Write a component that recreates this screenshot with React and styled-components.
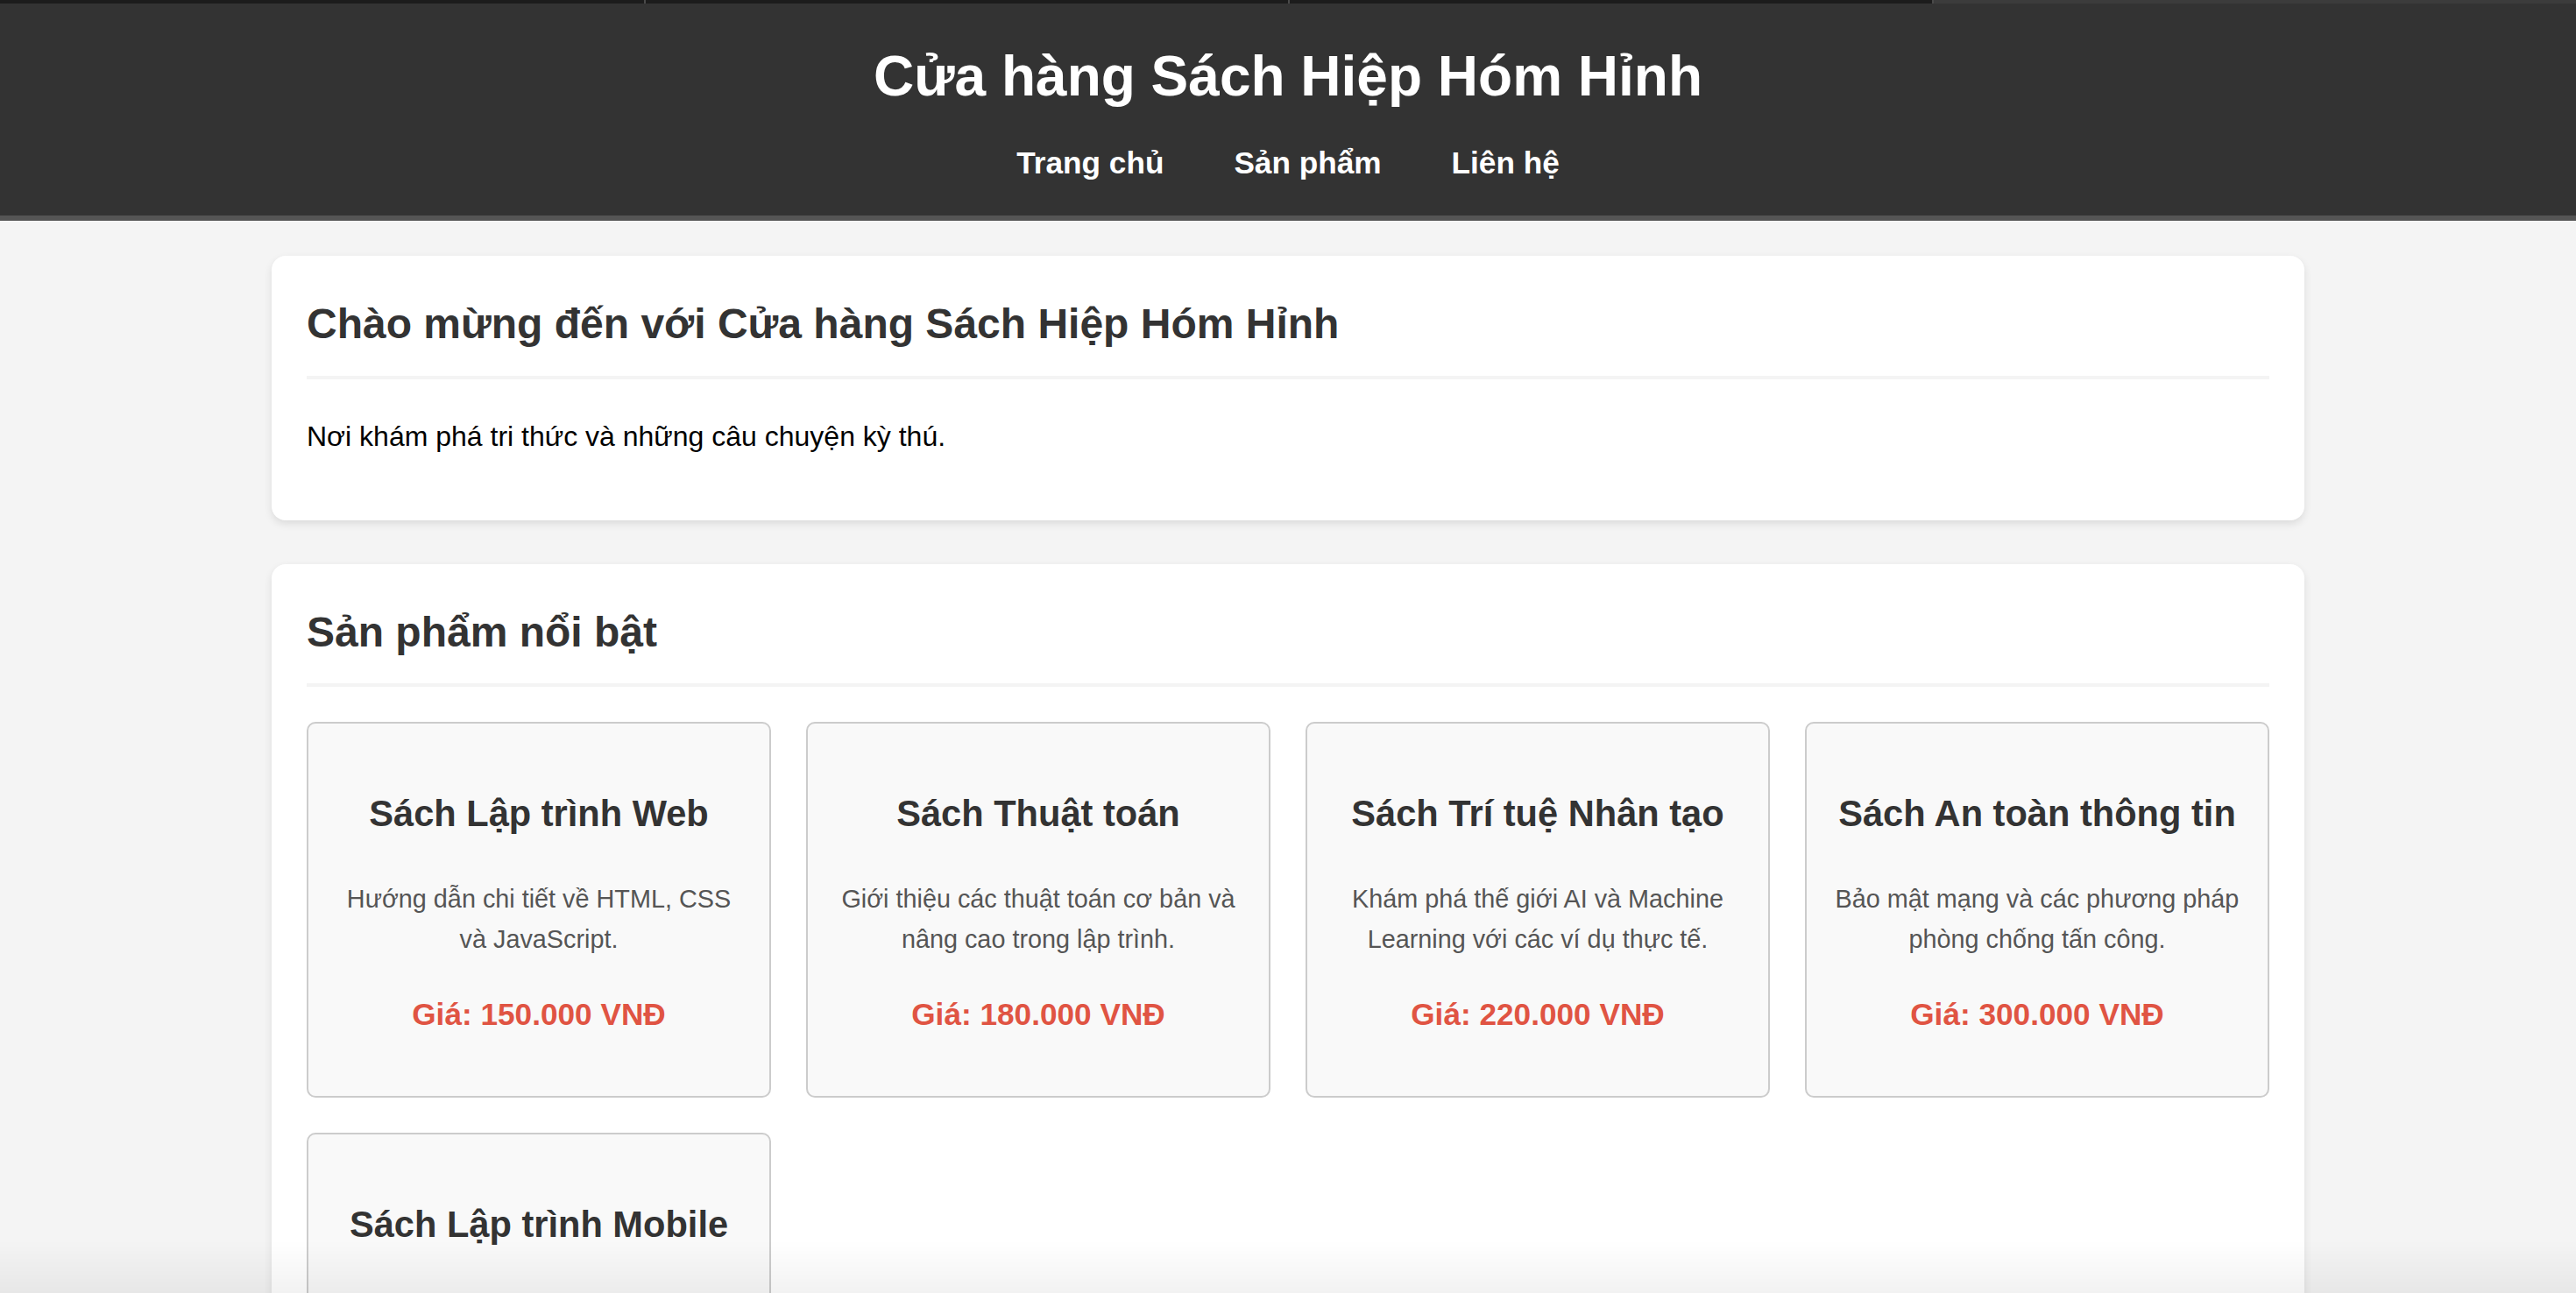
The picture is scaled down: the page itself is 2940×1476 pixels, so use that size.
import React from "react";
import styled, { createGlobalStyle } from "styled-components";

const GlobalStyle = createGlobalStyle`
    body {
        margin: 0;
        background-color: #f4f4f4;
        font-family: "Liberation Sans", Arial, sans-serif;
        line-height: 1.6;
        color: #000;
    }
`

const TabStrip = styled.div`
    display: grid;
    grid-template-columns: repeat(4, 1fr);
    height: 4px;
    background-color: #111;
`

const TabSegment = styled.div`
    background-color: ${props => props.active ? "#3c3c3c" : "#1c1c1c"};
    border-left: ${props => props.first ? "none" : "2px solid #4a4a4a"};
`

const Header = styled.header`
    background-color: #333;
    color: #fff;
    text-align: center;
    padding: 32px 0 31px;
    border-bottom: 6px solid #555;
`

const SiteTitle = styled.h1`
    margin: 0 0 20px;
    font-size: 64px;
    font-weight: bold;
`

const Nav = styled.nav`
    display: flex;
    justify-content: center;
`

const NavLink = styled.a`
    margin: 0 40px;
    color: #fff;
    font-size: 35.2px;
    font-weight: bold;
    text-decoration: none;
`

const Main = styled.main`
    max-width: 2320px;
    margin: 40px auto;
`

const Section = styled.section`
    background-color: #fff;
    border-radius: 16px;
    box-shadow: 0 4px 10px rgba(0, 0, 0, 0.1);
    padding: 40px;
    margin-bottom: 50px;
`

const SectionTitle = styled.h2`
    margin: 0 0 40px;
    padding-bottom: 20px;
    border-bottom: 4px solid #f4f4f4;
    font-size: 48px;
    color: #333;
`

const Intro = styled.p`
    margin: 0 0 30px;
    font-size: 32px;
`

const ProductGrid = styled.div`
    display: grid;
    grid-template-columns: repeat(auto-fill, minmax(500px, 1fr));
    gap: 40px;
`

const ProductCard = styled.div`
    background-color: #f9f9f9;
    border: 2px solid #ccc;
    border-radius: 10px;
    padding: 30px;
    text-align: center;
`

const ProductName = styled.h3`
    margin: 40px 0;
    font-size: 41.6px;
    color: #333;
`

const ProductDesc = styled.p`
    margin: 28.8px 0;
    font-size: 28.8px;
    color: #555;
`

const ProductPrice = styled.p`
    margin: 35.2px 0 34px;
    font-size: 35.2px;
    font-weight: bold;
    color: #e05443;
`

const BottomFade = styled.div`
    position: fixed;
    left: 0;
    right: 0;
    bottom: 0;
    height: 60px;
    pointer-events: none;
    background: linear-gradient(to bottom, rgba(0, 0, 0, 0), rgba(0, 0, 0, 0.05));
`

const products = [
    { name: "Sách Lập trình Web", desc: "Hướng dẫn chi tiết về HTML, CSS và JavaScript.", price: "150.000" },
    { name: "Sách Thuật toán", desc: "Giới thiệu các thuật toán cơ bản và nâng cao trong lập trình.", price: "180.000" },
    { name: "Sách Trí tuệ Nhân tạo", desc: "Khám phá thế giới AI và Machine Learning với các ví dụ thực tế.", price: "220.000" },
    { name: "Sách An toàn thông tin", desc: "Bảo mật mạng và các phương pháp phòng chống tấn công.", price: "300.000" },
    { name: "Sách Lập trình Mobile", desc: "Xây dựng ứng dụng di động cho Android và iOS.", price: "200.000" },
];

function App() {
    return (
        <>
            <GlobalStyle />
            <TabStrip>
                <TabSegment first />
                <TabSegment />
                <TabSegment />
                <TabSegment active />
            </TabStrip>
            <Header>
                <SiteTitle>Cửa hàng Sách Hiệp Hóm Hỉnh</SiteTitle>
                <Nav>
                    <NavLink href="#">Trang chủ</NavLink>
                    <NavLink href="#">Sản phẩm</NavLink>
                    <NavLink href="#">Liên hệ</NavLink>
                </Nav>
            </Header>
            <Main>
                <Section>
                    <SectionTitle>Chào mừng đến với Cửa hàng Sách Hiệp Hóm Hỉnh</SectionTitle>
                    <Intro>Nơi khám phá tri thức và những câu chuyện kỳ thú.</Intro>
                </Section>
                <Section>
                    <SectionTitle>Sản phẩm nổi bật</SectionTitle>
                    <ProductGrid>
                        {products.map(p => (
                            <ProductCard key={p.name}>
                                <ProductName>{p.name}</ProductName>
                                <ProductDesc>{p.desc}</ProductDesc>
                                <ProductPrice>Giá: {p.price} VNĐ</ProductPrice>
                            </ProductCard>
                        ))}
                    </ProductGrid>
                </Section>
            </Main>
            <BottomFade />
        </>
    );
}

export default App;
